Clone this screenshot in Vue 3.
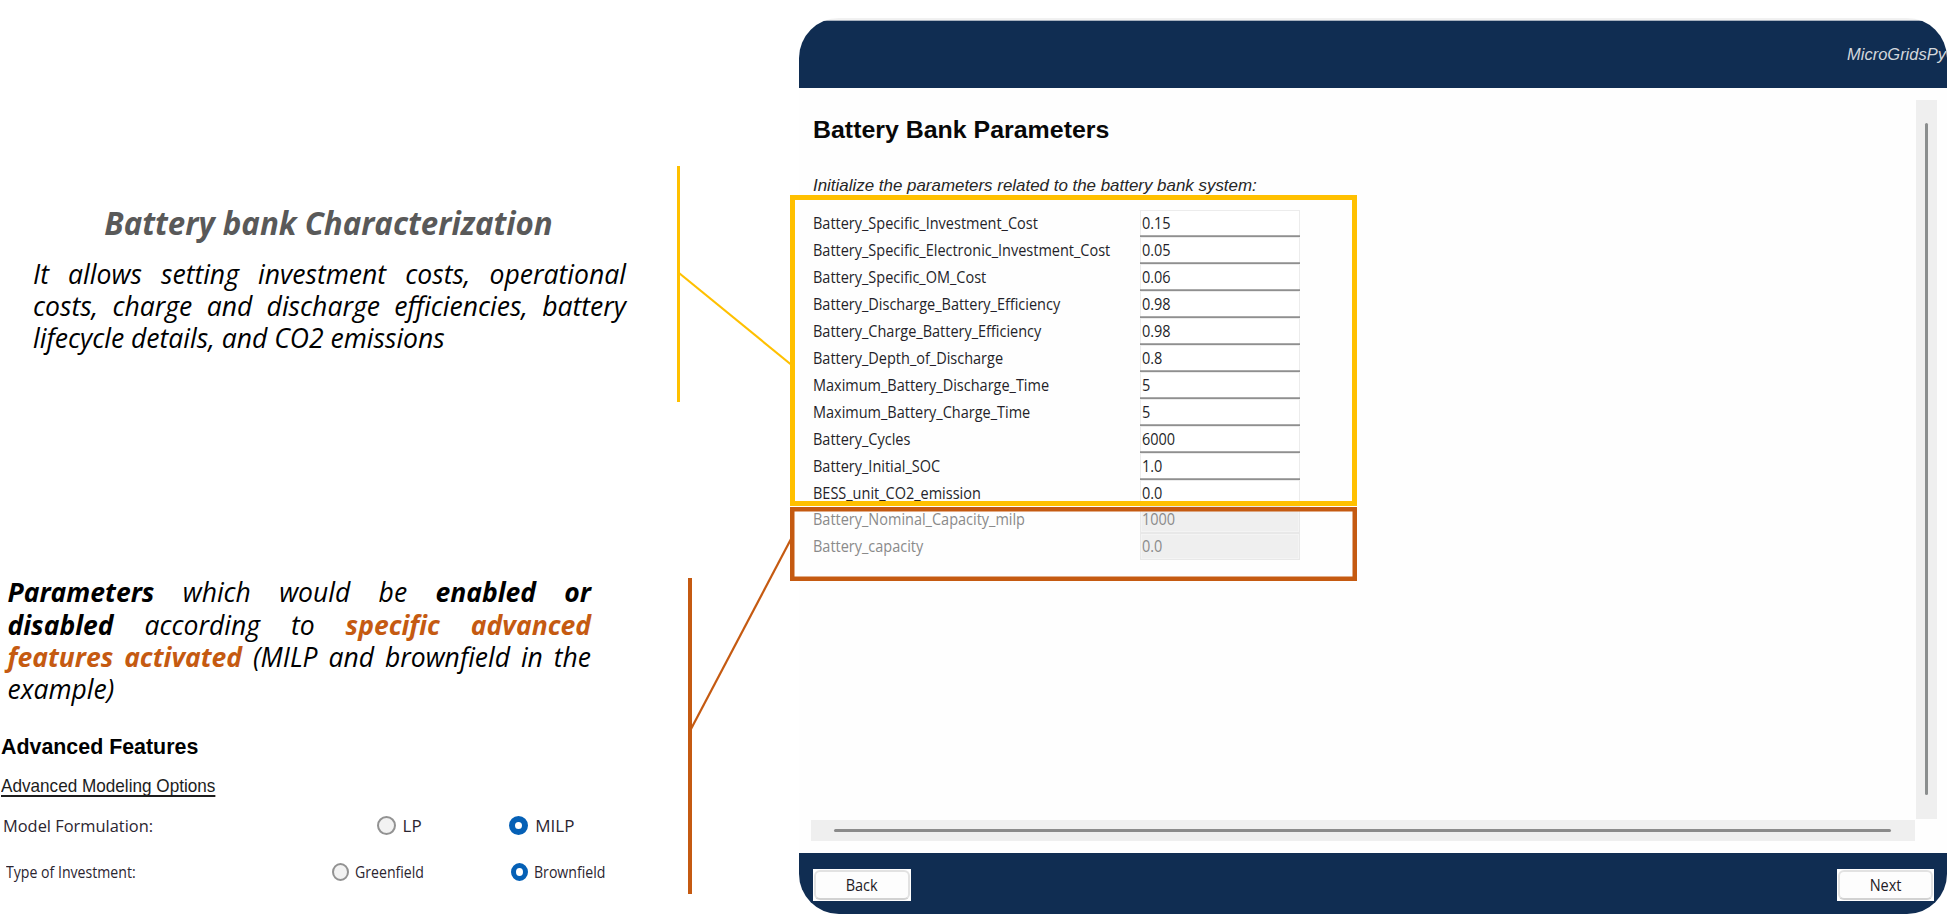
<script setup>
const params = [
  { name: 'Battery_Specific_Investment_Cost', value: '0.15' },
  { name: 'Battery_Specific_Electronic_Investment_Cost', value: '0.05' },
  { name: 'Battery_Specific_OM_Cost', value: '0.06' },
  { name: 'Battery_Discharge_Battery_Efficiency', value: '0.98' },
  { name: 'Battery_Charge_Battery_Efficiency', value: '0.98' },
  { name: 'Battery_Depth_of_Discharge', value: '0.8' },
  { name: 'Maximum_Battery_Discharge_Time', value: '5' },
  { name: 'Maximum_Battery_Charge_Time', value: '5' },
  { name: 'Battery_Cycles', value: '6000' },
  { name: 'Battery_Initial_SOC', value: '1.0' },
  { name: 'BESS_unit_CO2_emission', value: '0.0' },
  { name: 'Battery_Nominal_Capacity_milp', value: '1000', disabled: true },
  { name: 'Battery_capacity', value: '0.0', disabled: true }
]
</script>

<template>
  <div class="slide">
    <section class="notes">
      <h2 class="heading">Battery bank Characterization</h2>
      <p class="para first">It allows setting investment costs, operational costs, charge and discharge efficiencies, battery lifecycle details, and CO2 emissions</p>
      <p class="para second"><b>Parameters</b> which would be <b>enabled or disabled</b> according to <b class="hot">specific advanced features activated</b> (MILP and brownfield in the example)</p>

      <h3 class="features"><span>Advanced Features</span></h3>
      <div class="modeling"><span>Advanced Modeling Options</span></div>
      <div class="choice formulation">
        <span class="label">Model Formulation:</span>
        <span class="option"><i class="radio"></i><span>LP</span></span>
        <span class="option"><i class="radio on"></i><span>MILP</span></span>
      </div>
      <div class="choice investment">
        <span class="label">Type of Investment:</span>
        <span class="option"><i class="radio"></i><span class="txt">Greenfield</span></span>
        <span class="option"><i class="radio on"></i><span class="txt">Brownfield</span></span>
      </div>
    </section>

    <section class="window">
      <header class="bar"><span>MicroGridsPy</span></header>
      <div class="body">
        <main class="content">
          <h1 class="title"><span>Battery Bank Parameters</span></h1>
          <p class="intro"><span>Initialize the parameters related to the battery bank system:</span></p>
          <div v-for="p in params" :key="p.name" class="row" :class="{ disabled: p.disabled }">
            <span class="name"><span class="seg">{{ p.name }}</span></span>
            <span class="field"><span class="seg">{{ p.value }}</span></span>
          </div>
        </main>
        <div class="vscroll"><i></i></div>
        <div class="hscroll"><i></i></div>
      </div>
      <footer class="foot">
        <button class="btn"><span class="face"><span>Back</span></span></button>
        <button class="btn"><span class="face"><span>Next</span></span></button>
      </footer>
    </section>

    <!-- callout frames and connectors laid over the window -->
    <svg class="callouts" width="1952" height="921" viewBox="0 0 1952 921">
      <g stroke="#ffc000" fill="none">
        <path d="M678.5 166V402" stroke-width="3" />
        <path d="M679 273L791 364.5" stroke-width="2.2" />
        <rect x="792.5" y="197.5" width="562" height="306" stroke-width="5" />
      </g>
      <g stroke="#c55a11" fill="none">
        <path d="M690 578V894" stroke-width="4" />
        <path d="M691 729L791 539" stroke-width="2.2" />
        <rect x="792.25" y="509.25" width="562.5" height="69.5" stroke-width="4.5" />
      </g>
    </svg>
  </div>
</template>

<style>
body { margin: 0; background: #fff; }
</style>

<style scoped>
.slide {
  position: relative;
  display: flex;
  width: 1952px;
  height: 921px;
  overflow: hidden;
  background: #fff;
  font-family: "Open Sans", "Noto Sans", sans-serif;
  color: #000;
}
h1, h2, h3, p { margin: 0; }
.notes { width: 799px; flex: none; box-sizing: border-box; padding-top: 203px; }
.heading {
  width: 593px;
  margin-left: 32px;
  text-align: center;
  font: italic 700 31.25px/40px "Open Sans", sans-serif;
  color: #595959;
}
.para { font-size: 26.56px; font-style: italic; text-align: justify; }
.first { width: 593px; margin: 14.7px 0 0 33px; line-height: 32px; }
.second { width: 583.5px; margin: 222.5px 0 0 7.5px; line-height: 32.4px; font-size: 26.5px; }
.para b { font-weight: 700; }
.para .hot { color: #c55a11; }
.features { margin: 27px 0 0 .5px; font: 700 22px/28px "Liberation Sans", sans-serif; }
.features span { display: inline-block; transform: scaleX(.972); transform-origin: 0 50%; }
.modeling { margin: 13.4px 0 0 1px; font: 19px/24px "Liberation Sans", sans-serif; color: #1c1c1c; }
.modeling span {
  display: inline-block;
  transform: scaleX(.902);
  transform-origin: 0 50%;
  text-decoration: underline 1.5px;
  text-underline-offset: 3px;
  text-decoration-skip-ink: none;
}
.choice { display: grid; line-height: 24px; color: #2b2530; white-space: nowrap; }
.formulation { margin-top: 15.3px; padding-left: 2.6px; grid-template-columns: 374px 132.7px 1fr; font-size: 17px; }
.investment { margin-top: 22.2px; padding-left: 5.8px; grid-template-columns: 326px 179px 1fr; font-size: 16px; }
.label, .option .txt { transform-origin: 0 50%; }
.formulation .label { transform: scaleX(.965); }
.investment .label, .investment .txt { transform: scaleX(.882); }
.option { display: flex; align-items: center; }
.radio {
  width: 19px;
  height: 19px;
  box-sizing: border-box;
  margin-right: 7px;
  border: 2px solid #929292;
  border-radius: 50%;
  background: #f2f2f2;
}
.radio.on { border: 6px solid #0560b6; background: #fff; }
.investment .radio { width: 17px; height: 18px; margin-right: 6px; }
.investment .radio.on { border-width: 5px; }

.window {
  display: flex;
  flex-direction: column;
  width: 1147.5px;
  height: 896px;
  flex: none;
  box-sizing: border-box;
  margin-top: 18px;
  padding-top: 2.7px;
  border-radius: 40px;
  overflow: hidden;
  background: linear-gradient(#f1f1f1 0 2px, #a9b2bf 2px 3px, #fefefe 3px);
}
.bar {
  display: flex;
  height: 67px;
  flex: none;
  box-sizing: border-box;
  padding: 22.3px 0 0 1048px;
  background: #102d52;
  color: #d3d7dc;
  font: italic 17px/24px "Liberation Sans", sans-serif;
}
.bar span { transform: scaleX(.97); transform-origin: 0 50%; }
.body {
  display: grid;
  grid-template-columns: 1104px 20.7px;
  grid-template-rows: 719.5px 20.7px;
  column-gap: 1.3px;
  row-gap: 1px;
  height: 765.3px;
  box-sizing: border-box;
  padding: 12.2px 0 0 11.6px;
}
.content { padding: 15.6px 0 0 2.8px; }
.title { font: 700 24px/30px "Liberation Sans", sans-serif; color: #080808; }
.title span { display: inline-block; transform: scaleX(1.038); transform-origin: 0 50%; }
.intro { margin: 29.4px 0 13.3px; font: italic 17px/22px "Liberation Sans", sans-serif; color: #262626; }
.intro span { display: inline-block; transform: scaleX(.995); transform-origin: 0 50%; }
.row { display: grid; grid-template-columns: 326.6px 160px; height: 26.94px; line-height: 26.94px; font-size: 16px; color: #241f29; }
.seg { display: inline-block; transform: scaleX(.905); transform-origin: 0 50%; white-space: nowrap; }
.name { margin-left: -.6px; }
.field {
  height: 26.94px;
  box-sizing: border-box;
  padding-left: 2.4px;
  box-shadow: inset 0 -1.7px #8f8f8f, inset 0 0 0 1px #ececec;
  background: #fff;
}
.disabled { color: #8a8a8a; }
.disabled .field { background: #efefef; box-shadow: inset 0 0 0 1px #e8e8e8, inset 0 0 0 2px #f4f4f4; }
.vscroll, .hscroll { display: flex; background: #efefef; }
.vscroll { justify-content: center; padding: 23.3px 0 24.8px; }
.vscroll i { width: 2.8px; border-radius: 2px; background: #8b8e8e; }
.hscroll { align-items: center; padding: 0 24px 0 23px; }
.hscroll i { flex: 1; height: 2.8px; border-radius: 2px; background: #8b8b8b; }
.foot {
  display: flex;
  justify-content: space-between;
  flex: 1;
  box-sizing: border-box;
  padding: 16px 12.4px 0 14px;
  background: #102d52;
}
.btn { width: 97.5px; height: 32px; padding: 1px; border: 0; background: #fff; font: 16px "Open Sans", sans-serif; color: #1f1a26; }
.face {
  display: flex;
  align-items: center;
  justify-content: center;
  height: 30px;
  box-sizing: border-box;
  border: 2px solid #e2e2e2;
  border-bottom-color: #d2d2d2;
  border-radius: 6px;
  background: #fdfdfd;
}
.face span { transform: scaleX(.907); }
.callouts { position: absolute; left: 0; top: 0; pointer-events: none; }
</style>
